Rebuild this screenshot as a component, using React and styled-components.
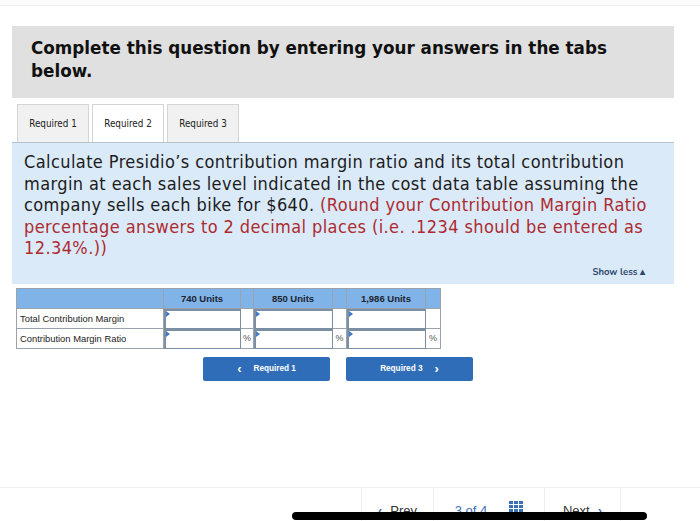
import React from 'react'
import styled, { createGlobalStyle } from 'styled-components'

const GlobalStyle = createGlobalStyle`
  body {
    margin: 0;
    background: #fff;
  }
`

const Page = styled.div`
  position: relative;
  display: flex;
  flex-direction: column;
  width: 700px;
  height: 521px;
  overflow: hidden;
  background: #fff;
  border-top: 5px solid #fbfbfb;
  box-sizing: border-box;
`
const TopRule = styled.div`
  height: 1px;
  background: #ededed;
`
const Main = styled.div`
  display: flex;
  flex-direction: column;
  margin: 20px 26px 0 12px;
`
const Header = styled.div`
  background: #e0e0e0;
  padding: 11px 40px 15px 19px;
  font-family: "DejaVu Sans", Verdana, sans-serif;
  font-weight: 700;
  font-size: 16.8px;
  line-height: 23px;
  color: #111;
`
const Tabs = styled.div`
  display: flex;
  gap: 3px;
  margin-top: 6px;
  padding-left: 5px;
  border-bottom: 1px solid #b3c3d3;
`
const Tab = styled.div`
  display: flex;
  align-items: center;
  justify-content: center;
  width: 70px;
  height: 37px;
  border: 1px solid #d4d4d4;
  border-bottom: none;
  background: ${p => (p.$active ? '#fff' : '#f1f1f1')};
  font-family: "DejaVu Sans Condensed", "DejaVu Sans", sans-serif;
  font-stretch: condensed;
  font-size: 9.8px;
  color: #222;
`
const Panel = styled.div`
  display: flex;
  flex-direction: column;
  background: #dbeaf8;
  padding: 8px 12px 6px 12px;
`
const Question = styled.p`
  margin: 0;
  font-family: "DejaVu Sans Condensed", "DejaVu Sans", sans-serif;
  font-stretch: condensed;
  font-size: 18px;
  letter-spacing: 0.4px;
  line-height: 21.5px;
  color: #1c1c1c;
`
const Note = styled.span`
  color: #ad2a30;
`
const ShowLess = styled.div`
  align-self: flex-end;
  margin: 6px 17px 0 0;
  font-family: "Nunito", Lato, sans-serif;
  font-weight: 700;
  font-size: 9.5px;
  color: #2b466d;
`
const Table = styled.div`
  display: grid;
  grid-template-columns: 147px 77px 13px 79px 14px 79px 15px;
  width: 424px;
  margin: 4px 0 0 4px;
  border-top: 1px solid #9aa3ad;
  border-left: 1px solid #9aa3ad;
  font-family: "Liberation Sans", Arial, sans-serif;
`
const HeadCell = styled.div`
  height: 19px;
  display: flex;
  align-items: center;
  justify-content: center;
  background: #80b3e8;
  border-right: 1px solid #9aa3ad;
  border-bottom: 1px solid #9aa3ad;
  font-size: 9.5px;
  font-weight: 700;
  color: #1d2430;
`
const LabelCell = styled.div`
  height: 19px;
  display: flex;
  align-items: center;
  padding-left: 3px;
  border-right: 1px solid #9aa3ad;
  border-bottom: 1px solid #9aa3ad;
  font-size: 9.4px;
  color: #222;
`
const InputCell = styled.div`
  position: relative;
  height: 20px;
  box-sizing: border-box;
  border: 1px solid #7c8ea3;
  border-top-width: 2px;
  border-left-width: 2px;
  background: #fff;
  &::before {
    content: '';
    position: absolute;
    left: 0;
    top: 0;
    border-top: 3px solid transparent;
    border-bottom: 3px solid transparent;
    border-left: 4px solid #3f7ccc;
  }
`
const UnitCell = styled.div`
  height: 19px;
  display: flex;
  align-items: center;
  justify-content: center;
  border-right: 1px solid #9aa3ad;
  border-bottom: 1px solid #9aa3ad;
  font-size: 9px;
  color: #555;
`
const NavRow = styled.div`
  display: flex;
  justify-content: center;
  gap: 16px;
  margin: 8px 0 0 0;
  padding-right: 10px;
`
const NavButton = styled.div`
  display: flex;
  align-items: center;
  justify-content: center;
  gap: 12px;
  width: 127px;
  height: 24px;
  border-radius: 2px;
  background: #2f6db9;
  font-family: "Liberation Sans", Arial, sans-serif;
  font-weight: 700;
  font-size: 8.2px;
  color: #fff;
`
const Chevron = styled.span`
  font-size: 13px;
  font-weight: 700;
  line-height: 1;
`
const Footer = styled.div`
  display: flex;
  margin-top: auto;
  height: 33px;
  padding-left: 361px;
  border-top: 1px solid #f0f0f0;
  font-family: "Liberation Sans", Arial, sans-serif;
  font-size: 13px;
`
const FooterItem = styled.div`
  display: flex;
  align-items: flex-end;
  justify-content: center;
  gap: ${p => p.$gap || 8}px;
  width: ${p => p.$w}px;
  padding-bottom: 3px;
  border-left: 1px solid #eeeeee;
  border-right: ${p => (p.$last ? '1px solid #eeeeee' : 'none')};
  color: #333;
`
const Blue = styled.span`
  color: #3b6fb5;
  font-weight: ${p => (p.$bold ? 700 : 400)};
`
const HomeBar = styled.div`
  position: absolute;
  left: 292px;
  bottom: 1px;
  width: 355px;
  height: 8px;
  border-radius: 4px;
  background: #000;
`

function GridIcon() {
  return (
    <svg width="14" height="11" viewBox="0 0 14 11" style={{ marginBottom: 6 }}>
      {[0, 4, 8].map(y =>
        [0, 5, 10].map(x => <rect key={x + '-' + y} x={x} y={y} width="4" height="3" fill="#3b6fb5" />)
      )}
    </svg>
  )
}

const units = ['740 Units', '850 Units', '1,986 Units']

function App() {
  return (
    <Page>
      <GlobalStyle />
      <TopRule />
      <Main>
        <Header>Complete this question by entering your answers in the tabs below.</Header>
        <Tabs>
          <Tab>Required 1</Tab>
          <Tab $active>Required 2</Tab>
          <Tab>Required 3</Tab>
        </Tabs>
        <Panel>
          <Question>
            Calculate Presidio’s contribution margin ratio and its total contribution margin at each sales
            level indicated in the cost data table assuming the company sells each bike for $640.{' '}
            <Note>
              (Round your Contribution Margin Ratio percentage answers to 2 decimal places (i.e. .1234
              should be entered as 12.34%.))
            </Note>
          </Question>
          <ShowLess>Show less ▴</ShowLess>
        </Panel>
        <Table>
          <HeadCell />
          {units.map(u => (
            <React.Fragment key={u}>
              <HeadCell>{u}</HeadCell>
              <HeadCell />
            </React.Fragment>
          ))}
          <LabelCell>Total Contribution Margin</LabelCell>
          {units.map(u => (
            <React.Fragment key={u}>
              <InputCell />
              <UnitCell />
            </React.Fragment>
          ))}
          <LabelCell>Contribution Margin Ratio</LabelCell>
          {units.map(u => (
            <React.Fragment key={u}>
              <InputCell />
              <UnitCell>%</UnitCell>
            </React.Fragment>
          ))}
        </Table>
        <NavRow>
          <NavButton>
            <Chevron>‹</Chevron>
            Required 1
          </NavButton>
          <NavButton>
            Required 3
            <Chevron>›</Chevron>
          </NavButton>
        </NavRow>
      </Main>
      <Footer>
        <FooterItem $w={71}>
          <Blue $bold>‹</Blue>
          Prev
        </FooterItem>
        <FooterItem $w={110} $gap={22}>
          <Blue>3 of 4</Blue>
          <GridIcon />
        </FooterItem>
        <FooterItem $w={75} $last>
          Next
          <Blue $bold>›</Blue>
        </FooterItem>
      </Footer>
      <HomeBar />
    </Page>
  )
}

export default App
